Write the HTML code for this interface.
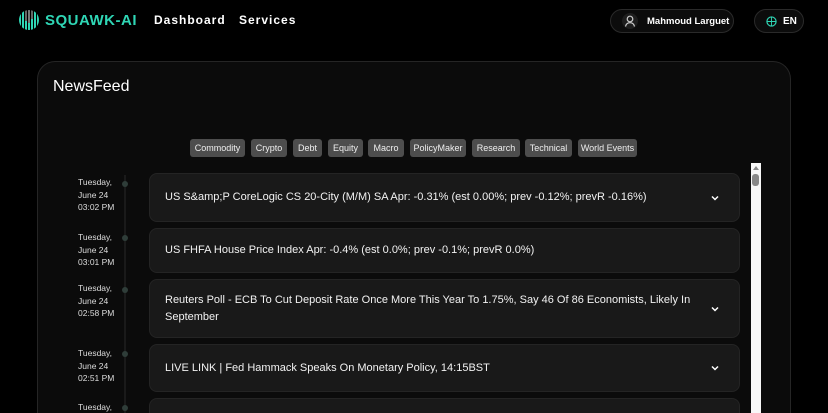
<!DOCTYPE html>
<html style="width:828px;height:413px;overflow:hidden"><head><meta charset="utf-8"><style>
*{margin:0;padding:0;box-sizing:border-box}
body{width:828px;height:413px;overflow:hidden;background:#000;font-family:"Liberation Sans",sans-serif;color:#fff;position:relative}
.a{position:absolute}
.nav{font-weight:bold;font-size:12px;letter-spacing:1px;top:13px}
.pill{border:1px solid #2a2a2a;background:#0c0c0c;border-radius:14px;height:24px;top:9px;display:flex;align-items:center;font-size:10px;font-weight:bold;white-space:nowrap}
.panel{left:37px;top:61px;width:754px;height:352px;border:1px solid #252525;border-bottom:none;border-radius:18px 18px 0 0;background:#0b0b0b}
.tag{position:absolute;top:139px;height:18px;background:#4d4d4d;border-radius:3px;font-size:9px;line-height:18px;text-align:center;color:#eee;white-space:nowrap}
.date{position:absolute;left:78px;width:50px;text-align:left;font-size:8.5px;line-height:12.5px;color:#ddd}
.dot{position:absolute;left:122px;width:6px;height:6px;border-radius:50%;background:#2f3d39}
.card{position:absolute;left:149px;width:591px;background:#191919;border:1px solid #242424;border-radius:8px;font-size:11px;line-height:17px;padding:0 40px 0 15px;display:flex;align-items:center;color:#f2f2f2}
.chev{position:absolute;right:20px;top:50%;margin-top:-4px;width:8px;height:8px}
</style></head><body>
<svg class="a" style="left:18px;top:9px" width="22" height="22" viewBox="0 0 22 22">
<defs><clipPath id="c"><circle cx="11" cy="11" r="10"/></clipPath></defs>
<g clip-path="url(#c)">
<rect x="1" y="5" width="2" height="12" fill="#2fd6b5"/><rect x="4" y="2" width="2" height="18" fill="#2fd6b5"/>
<rect x="7" y="0" width="2" height="12" fill="#666"/><rect x="7" y="12" width="2" height="10" fill="#2fd6b5"/>
<rect x="10" y="0" width="2" height="14" fill="#777"/><rect x="10" y="14" width="2" height="8" fill="#2fd6b5"/>
<rect x="13" y="0" width="2" height="10" fill="#666"/><rect x="13" y="10" width="2" height="12" fill="#2fd6b5"/>
<rect x="16" y="2" width="2" height="18" fill="#2fd6b5"/><rect x="19" y="5" width="2" height="12" fill="#2fd6b5"/></g></svg>
<div class="a" style="left:45px;top:12px;font-weight:bold;font-size:15px;color:#2fd6b5;letter-spacing:.5px">SQUAWK-AI</div>
<div class="a nav" style="left:154px">Dashboard</div>
<div class="a nav" style="left:239px">Services</div>
<div class="a pill" style="left:610px;width:124px">
<svg style="margin-left:11px" width="16" height="16" viewBox="0 0 16 16"><circle cx="8" cy="8" r="8" fill="#1e1e1e"/><circle cx="8" cy="6" r="2.8" fill="none" stroke="#ccc" stroke-width="1.2"/><path d="M3.5 13.5c.5-2.5 2.3-3.8 4.5-3.8s4 1.3 4.5 3.8" fill="none" stroke="#ccc" stroke-width="1.2"/></svg>
<span style="margin-left:9px;font-size:9.5px">Mahmoud Larguet</span></div>
<div class="a pill" style="left:754px;width:50px">
<svg style="margin-left:11px" width="11" height="11" viewBox="0 0 12 12"><circle cx="6" cy="6" r="5" fill="none" stroke="#2fd6b5" stroke-width="1.3"/><path d="M1 6h10M6 1v10" stroke="#2fd6b5" stroke-width="1"/></svg>
<span style="margin-left:6px">EN</span></div>
<div class="a panel"></div>
<div class="a" style="left:53px;top:78px;font-size:16px">NewsFeed</div>
<div class="tag" style="left:190px;width:55px">Commodity</div>
<div class="tag" style="left:251px;width:36px">Crypto</div>
<div class="tag" style="left:293px;width:29px">Debt</div>
<div class="tag" style="left:328px;width:35px">Equity</div>
<div class="tag" style="left:368px;width:36px">Macro</div>
<div class="tag" style="left:410px;width:56px">PolicyMaker</div>
<div class="tag" style="left:472px;width:48px">Research</div>
<div class="tag" style="left:525px;width:47px">Technical</div>
<div class="tag" style="left:578px;width:59px">World Events</div>
<div class="a" style="left:124px;top:175px;width:2px;height:238px;background:#1a1a1a"></div>
<div class="a" style="left:751px;top:163px;width:10px;height:250px;background:#f7f7f7"></div>
<div class="a" style="left:752px;top:174px;width:7px;height:12px;background:#888;border-radius:3px"></div>
<div class="a" style="left:753px;top:166px;width:0;height:0;border-left:3px solid transparent;border-right:3px solid transparent;border-bottom:4px solid #888"></div>

<div class="date" style="top:176px">Tuesday,<br>June 24<br>03:02 PM</div><div class="dot" style="top:181px"></div>
<div class="card" style="top:173px;height:49px">US S&amp;amp;P CoreLogic CS 20-City (M/M) SA Apr: -0.31% (est 0.00%; prev -0.12%; prevR -0.16%)<svg class="chev" viewBox="0 0 8 8"><path d="M1 2.5l3 3 3-3" fill="none" stroke="#fff" stroke-width="1.5"/></svg></div>

<div class="date" style="top:231px">Tuesday,<br>June 24<br>03:01 PM</div><div class="dot" style="top:235px"></div>
<div class="card" style="top:228px;height:45px">US FHFA House Price Index Apr: -0.4% (est 0.0%; prev -0.1%; prevR 0.0%)</div>

<div class="date" style="top:282px">Tuesday,<br>June 24<br>02:58 PM</div><div class="dot" style="top:287px"></div>
<div class="card" style="top:279px;height:59px">Reuters Poll - ECB To Cut Deposit Rate Once More This Year To 1.75%, Say 46 Of 86 Economists, Likely In September<svg class="chev" viewBox="0 0 8 8"><path d="M1 2.5l3 3 3-3" fill="none" stroke="#fff" stroke-width="1.5"/></svg></div>

<div class="date" style="top:347px">Tuesday,<br>June 24<br>02:51 PM</div><div class="dot" style="top:351px"></div>
<div class="card" style="top:344px;height:48px">LIVE LINK | Fed Hammack Speaks On Monetary Policy, 14:15BST<svg class="chev" viewBox="0 0 8 8"><path d="M1 2.5l3 3 3-3" fill="none" stroke="#fff" stroke-width="1.5"/></svg></div>

<div class="date" style="top:401px;height:12px;overflow:hidden">Tuesday,</div><div class="dot" style="top:405px"></div>
<div class="card" style="top:398px;height:15px;border-bottom:none;border-radius:8px 8px 0 0"></div>
</body></html>
